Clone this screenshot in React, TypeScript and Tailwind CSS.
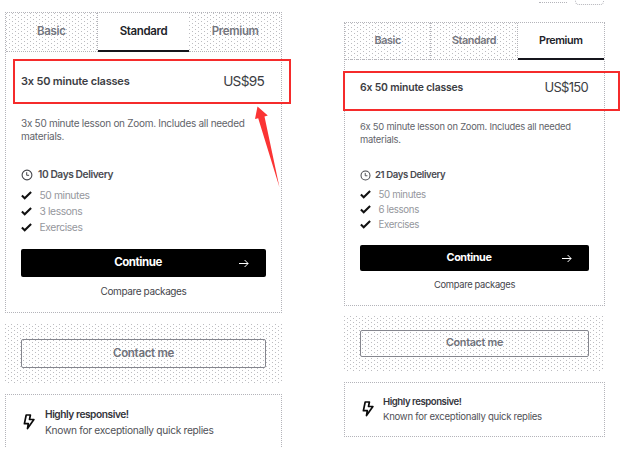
const ditherTile =
  "bg-[conic-gradient(from_270deg_at_1px_1px,#bcbcc0_90deg,transparent_0),conic-gradient(from_270deg_at_1px_1px,#bcbcc0_90deg,transparent_0)] bg-[length:6px_4px] bg-[position:0_0,3px_2px]";

function Clock({ className }: { className: string }) {
  return (
    <svg viewBox="0 0 12 12" className={className} fill="none" stroke="#45464c">
      <circle cx="6" cy="6" r="4.9" strokeWidth="1.1" />
      <path d="M5.7 3.2v3.1h2.4" strokeWidth="1" />
    </svg>
  );
}

function Check() {
  return (
    <svg viewBox="0 0 11 9" className="h-[9px] w-[11px] shrink-0" fill="none" stroke="#111" strokeWidth="2.1">
      <path d="M0.9 4.6 3.7 7.2 10.1 1.1" />
    </svg>
  );
}

function Arrow() {
  return (
    <svg viewBox="0 0 10 9" className="h-[9px] w-[10px]" fill="none" stroke="#fff">
      <path d="M0 4.5h9M5.6 1l3.5 3.5L5.6 8" />
    </svg>
  );
}

function Bolt() {
  return (
    <svg viewBox="0 0 12 16" className="h-4 w-3 shrink-0" fill="none" stroke="#0b0b0b" strokeWidth="1.7" strokeLinejoin="round">
      <path d="M3.2 1h4.2L6.5 5.5h4.4L4.5 14.6l.8-4.9H1.4z" />
    </svg>
  );
}

const left = {
  active: 1,
  title: "3x 50 minute classes",
  price: "US$95",
  desc: "3x 50 minute lesson on Zoom. Includes all needed",
  delivery: "10 Days Delivery",
  features: ["50 minutes", "3 lessons", "Exercises"],
  root: "ml-[5px] mt-3 w-[277px]",
  card: "h-[301px]",
  tabs: "h-[39px] text-[11.5px] tracking-[-0.35px]",
  head: "h-[58px] text-[11px] tracking-[-0.2px]",
  priceText: "pr-[2px] text-[13.7px] tracking-[-0.75px]",
  descText: "h-[52px] pt-[7px] text-[10px] leading-[13px] tracking-[-0.28px]",
  deliveryRow: "h-[25px] text-[10.2px] tracking-[-0.4px]",
  clock: "h-3 w-3 mr-[5px]",
  list: "text-[10.3px] leading-4 h-[62px] tracking-[-0.4px]",
  button: "h-7 text-[11.5px] tracking-[-0.45px]",
  compare: "h-[29px] text-[10px] tracking-[-0.38px]",
  contact: "mt-[11px] h-[59px]",
  contactButton: "h-[29px] text-[11.5px] tracking-[-0.3px]",
  info: "mt-[11px] h-[53px] border-b-0 pt-[1px] gap-[10px]",
  infoText: "text-[10.2px] leading-4 tracking-[-0.3px]",
  infoTitle: "tracking-[-0.45px]",
};

const right = {
  active: 2,
  title: "6x 50 minute classes",
  price: "US$150",
  desc: "6x 50 minute lesson on Zoom. Includes all needed",
  delivery: "21 Days Delivery",
  features: ["50 minutes", "6 lessons", "Exercises"],
  root: "ml-[62px] mt-[22px] w-[261px]",
  card: "h-[284px]",
  tabs: "h-[37px] text-[10.8px] tracking-[-0.4px]",
  head: "h-[54px] pt-px text-[10.4px] tracking-[-0.16px]",
  priceText: "pr-px text-[13px] tracking-[-0.7px]",
  descText: "h-[49px] pt-[6px] text-[9.4px] leading-[13px] tracking-[-0.24px]",
  deliveryRow: "h-[24px] text-[9.6px] tracking-[-0.38px]",
  clock: "h-[11px] w-[11px] mr-1",
  list: "text-[9.7px] leading-[15px] h-[58px] tracking-[-0.35px]",
  button: "h-[26px] text-[10.8px] tracking-[-0.4px]",
  compare: "h-[28px] text-[9.4px] tracking-[-0.33px]",
  contact: "mt-[10px] h-[55px]",
  contactButton: "h-[27px] text-[10.8px] tracking-[-0.3px]",
  info: "mt-[11px] h-[55px] pb-[2px] gap-[9px]",
  infoText: "text-[9.6px] leading-[15px] tracking-[-0.28px]",
  infoTitle: "tracking-[-0.45px]",
};

function Package({ p }: { p: typeof left }) {
  return (
    <section className={`shrink-0 ${p.root}`}>
      <div className={`border border-dotted border-[#b4b4ba] ${p.card}`}>
        <div className={`grid grid-cols-3 font-semibold ${p.tabs}`}>
          {["Basic", "Standard", "Premium"].map((t, i) => (
            <div
              key={t}
              className={`flex items-center justify-center ${
                i === p.active
                  ? "border-b-2 border-[#15151c] pt-px text-[#222329]"
                  : `border-b border-dotted border-[#b4b4ba] text-[#74767e] ${ditherTile}`
              } ${i < 2 && i !== p.active ? "border-r" : ""}`}
            >
              {t}
            </div>
          ))}
        </div>
        <div className="px-[15px]">
          <div className={`flex items-center justify-between font-semibold text-[#3c3d43] ${p.head}`}>
            <span>{p.title}</span>
            <span className={`font-normal ${p.priceText}`}>{p.price}</span>
          </div>
          <p className={`whitespace-nowrap text-[#62646a] ${p.descText}`}>
            {p.desc}
            <br />
            materials.
          </p>
          <div className={`flex items-center font-semibold text-[#4a4b51] ${p.deliveryRow}`}>
            <Clock className={p.clock} />
            {p.delivery}
          </div>
          <ul className={`text-[#95979d] ${p.list}`}>
            {p.features.map((f) => (
              <li key={f} className="flex items-center gap-[7.5px]">
                <Check />
                {f}
              </li>
            ))}
          </ul>
          <div className={`grid grid-cols-[1fr_auto_1fr] items-center rounded-[2px] bg-black font-bold text-white ${p.button}`}>
            <span />
            <span className="pr-[11px]">Continue</span>
            <span className="flex justify-end pr-[17px]">
              <Arrow />
            </span>
          </div>
          <div className={`flex items-center justify-center text-[#45464c] ${p.compare}`}>Compare packages</div>
        </div>
      </div>
      <div className={`flex items-center px-4 ${ditherTile} ${p.contact}`}>
        <div className={`flex w-full items-center justify-center rounded-[2px] border border-[#85868e] font-semibold text-[#70727a] ${p.contactButton}`}>
          Contact me
        </div>
      </div>
      <div className={`flex items-center border border-dotted border-[#b4b4ba] pl-[17px] ${p.info}`}>
        <Bolt />
        <div className={`whitespace-nowrap text-[#505157] ${p.infoText}`}>
          <div className={`font-semibold text-[#34353b] ${p.infoTitle}`}>Highly responsive!</div>
          <div>Known for exceptionally quick replies</div>
        </div>
      </div>
    </section>
  );
}

export default function App() {
  return (
    <main className="relative flex h-[459px] w-[638px] items-start overflow-hidden bg-white font-['Inter','Liberation_Sans',sans-serif] [font-feature-settings:'calt'_0]">
      <Package p={left} />
      <Package p={right} />
      <div className="absolute left-[13px] top-[59px] h-[45px] w-[278px] border-2 border-[#f52b2b]" />
      <div className="absolute left-[343px] top-[71px] h-[40px] w-[277px] border-2 border-[#f52b2b]" />
      <svg className="absolute left-[250px] top-[104px] h-[85px] w-[34px]" viewBox="0 0 34 85" fill="#fb3434">
        <path d="M7.5 2.5 5 15l3.2-.8L29.5 83.5 14.5 12.6l3.3-1z" />
      </svg>
      <div className="absolute left-[539px] top-[2px] w-7 border-t border-dotted border-[#b4b4ba]" />
      <div className="absolute left-[575px] top-[-6px] h-[11px] w-[29px] rounded-b-[4px] border border-dotted border-[#b4b4ba]" />
    </main>
  );
}
